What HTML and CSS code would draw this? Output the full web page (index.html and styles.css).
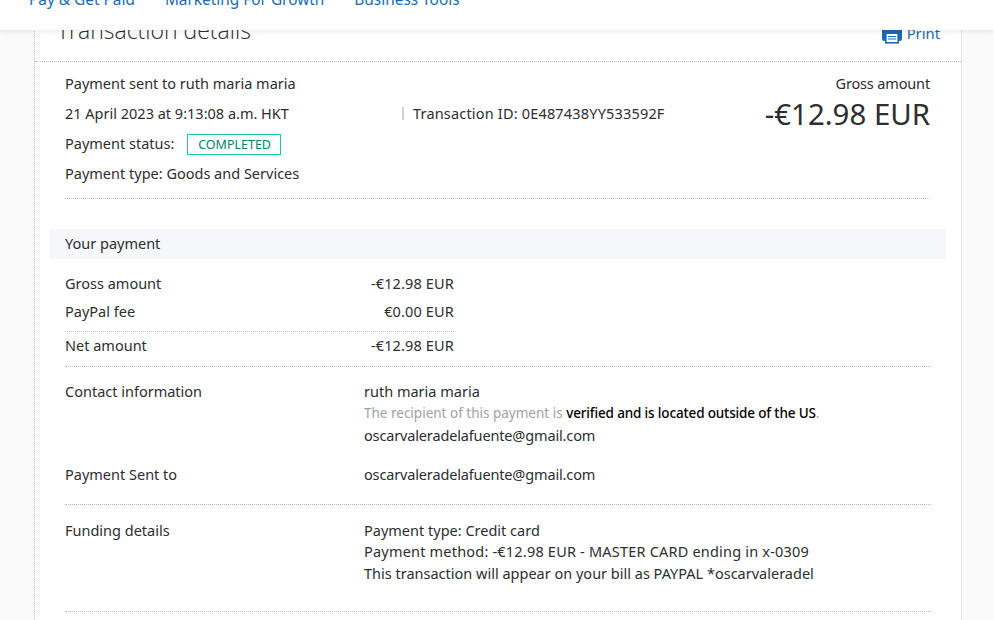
FILE: index.html
```html
<!DOCTYPE html>
<html>

<head>
	<title>Transaction details</title>

	<link rel="stylesheet" href="styles.css">
</head>

<body>
	<header class="topbar">
		<nav class="topnav">
			<a href="#">Pay &amp; Get Paid</a>
			<a href="#">Marketing For Growth</a>
			<a href="#">Business Tools</a>
		</nav>
	</header>

	<main class="card">
		<div class="card-head">
			<h1>Transaction details</h1>
			<a class="print" href="#">
				<svg width="20" height="20" viewBox="0 0 20 20">
					<path d="M2 2h16a2 2 0 0 1 2 2v11a2 2 0 0 1-2 2h-1V9H3v8H2a2 2 0 0 1-2-2V4a2 2 0 0 1 2-2z" fill="#1a6bb0"/>
					<rect x="3.8" y="9.2" width="12.4" height="9.6" fill="#fff" stroke="#1a6bb0" stroke-width="1.6"/>
					<path d="M6 12.5h8M6 15h8" stroke="#1a6bb0" stroke-width="1"/>
				</svg>
				Print
			</a>
		</div>

		<section class="summary">
			<div class="summary-left">
				<p class="line-first">Payment sent to ruth maria maria</p>
				<div class="date-row">
					<span class="date">21 April 2023 at 9:13:08 a.m. HKT</span>
					<span class="txn">Transaction ID: 0E487438YY533592F</span>
				</div>
				<p class="status-row">Payment status: <span class="badge">COMPLETED</span></p>
				<p class="type-row">Payment type: Goods and Services</p>
			</div>
			<div class="summary-right">
				<div class="gross-label">Gross amount</div>
				<div class="big-amount">-€12.98 EUR</div>
			</div>
		</section>

		<h2 class="band">Your payment</h2>

		<section class="amounts">
			<div class="amount-row"><span>Gross amount</span><span class="value">-€12.98 EUR</span></div>
			<div class="amount-row"><span>PayPal fee</span><span class="value">€0.00 EUR</span></div>
			<div class="amount-row net"><span>Net amount</span><span class="value">-€12.98 EUR</span></div>
		</section>

		<section class="detail contact">
			<div class="detail-label">Contact information</div>
			<div>
				ruth maria maria<br>
				<span class="muted">The recipient of this payment is <b>verified and is located outside of the US</b>.</span><br>
				<span class="email">oscarvaleradelafuente@gmail.com</span>
			</div>
		</section>

		<section class="detail sent">
			<div class="detail-label">Payment Sent to</div>
			<div class="email">oscarvaleradelafuente@gmail.com</div>
		</section>

		<section class="detail funding">
			<div class="detail-label">Funding details</div>
			<div>
				Payment type: Credit card<br>
				<span class="method">Payment method: -€12.98 EUR - MASTER CARD ending in x-0309</span><br>
				This transaction will appear on your bill as PAYPAL *oscarvaleradel
			</div>
		</section>
	</main>
</body>

</html>
```

FILE: styles.css
```css
html, body {
	height: 620px;
	overflow: hidden;
}

body {
	margin: 0;
	background-color: #fafafa;
	color: #2c2e2f;
	font-family: "Noto Sans", sans-serif;
	font-size: 14.5px;
}

p, h1, h2 {
	margin: 0;
	font-weight: 400;
}

a {
	color: #1a6bb0;
	text-decoration: none;
}

.topbar {
	position: relative;
	z-index: 2;
	height: 30px;
	overflow: hidden;
	background-color: #fff;
	box-shadow: 0 1px 6px rgba(0, 0, 0, 0.1);
}

.topnav {
	display: flex;
	gap: 30px;
	margin-top: -11px;
	padding-left: 29px;
	font-size: 15.4px;
	line-height: 21px;
}

.card {
	width: 926px;
	height: 640px;
	margin-left: 34px;
	margin-top: -30px;
	background-color: #fff;
	border-left: 1px dotted #c4c4c4;
	border-right: 1px solid #e4e4e4;
}

.card-head {
	display: flex;
	justify-content: space-between;
	height: 62px;
	padding: 15px 21px 0 22px;
	box-sizing: border-box;
	border-bottom: 1px dotted #b9b9b9;
}

.card-head h1 {
	font-family: "Open Sans", sans-serif;
	font-size: 23px;
	font-weight: 300;
	line-height: 30px;
	color: #2c2e2f;
}

.print {
	display: flex;
	gap: 5px;
	align-items: flex-start;
	font-size: 14.8px;
	line-height: 36px;
}

.print svg {
	margin-top: 9px;
}

.summary {
	display: flex;
	justify-content: space-between;
	margin: 0 31px 0 30px;
	height: 136px;
	border-bottom: 1px dotted #b9b9b9;
}

.summary-left {
	flex: 1;
	line-height: 20px;
}

.line-first {
	padding-top: 11px;
}

.date-row {
	display: flex;
	padding-top: 10px;
}

.date {
	width: 337px;
}

.txn {
	padding-left: 11px;
	letter-spacing: 0.18px;
	background: linear-gradient(#c9d2d8, #c9d2d8) no-repeat 0 4px / 2px 13px;
}

.status-row {
	padding-top: 10px;
}

.badge {
	display: inline-block;
	margin-left: 9px;
	padding: 0 9px 0 10px;
	border: 1px solid #19c99a;
	color: #00826a;
	font-size: 12.5px;
	line-height: 19px;
}

.type-row {
	padding-top: 8px;
}

.summary-right {
	padding-top: 11px;
	text-align: right;
	line-height: 20px;
}

.gross-label {
	letter-spacing: -0.15px;
}

.big-amount {
	margin-top: 3px;
	font-size: 29.4px;
	line-height: 36px;
}

.band {
	margin: 30px 15px 0;
	padding: 0 0 1px 15px;
	background-color: #f5f7fa;
	font-size: 14.5px;
	line-height: 29px;
}

.amounts {
	width: 389px;
	margin: 14px 0 0 30px;
}

.amount-row {
	display: flex;
	justify-content: space-between;
	line-height: 20px;
	padding-bottom: 8px;
}

.amount-row + .amount-row {
	padding-bottom: 10px;
}

.amount-row.net {
	border-top: 1px dotted #b9b9b9;
	padding-top: 3px;
	padding-bottom: 11px;
}

.value {
	letter-spacing: 0.15px;
}

.detail {
	display: flex;
	margin: 0 30px;
	line-height: 21.3px;
}

.detail-label {
	width: 299px;
	flex: none;
}

.contact {
	border-top: 1px dotted #b9b9b9;
	padding-top: 14px;
}

.sent {
	padding-top: 18px;
	padding-bottom: 19px;
}

.funding {
	border-top: 1px dotted #b9b9b9;
	border-bottom: 1px dotted #b9b9b9;
	padding-top: 15px;
	padding-bottom: 27px;
}

.email {
	letter-spacing: -0.15px;
}

.method {
	letter-spacing: 0.2px;
}

.muted {
	color: #9da3a6;
	font-size: 13.5px;
}

.muted b {
	color: #000;
	font-weight: 500;
	letter-spacing: -0.15px;
}
```
